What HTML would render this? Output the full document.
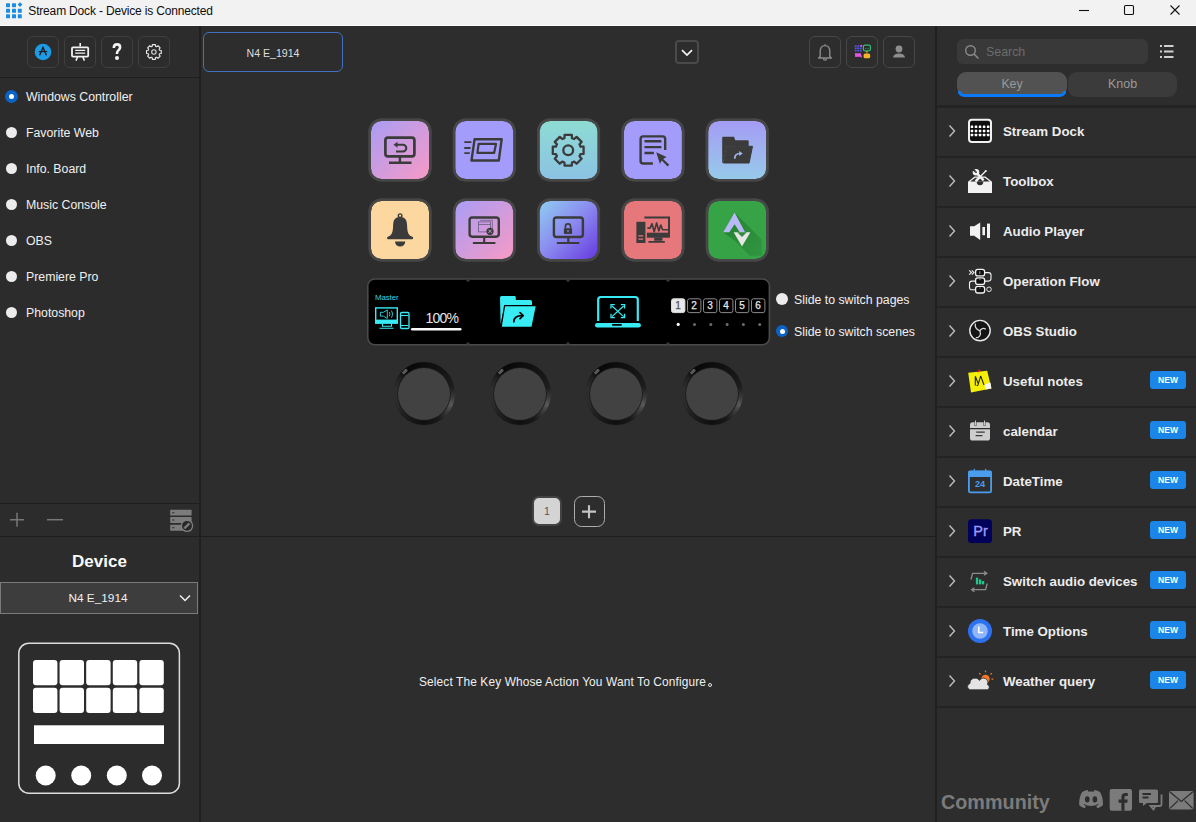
<!DOCTYPE html><html><head><meta charset="utf-8"><style>
*{box-sizing:border-box;margin:0;padding:0}
html,body{width:1196px;height:822px;overflow:hidden;background:#2d2d2d;font-family:"Liberation Sans",sans-serif;color:#e8e8e8}
.abs{position:absolute}
.tbtn{position:absolute;width:32px;height:32px;border:1px solid #3f3f3f;border-radius:6px}
.radio{position:absolute;width:13px;height:13px;border-radius:50%;background:#ececec}
.radio.on{background:#0b63c6}
.radio.on::after{content:"";position:absolute;left:4px;top:4px;width:5px;height:5px;border-radius:50%;background:#fff}
.ritem{position:absolute;font-size:12.3px;white-space:nowrap;color:#f0f0f0}
.nm{position:absolute;left:1003px;font-size:13.3px;font-weight:bold;color:#ececec;white-space:nowrap}
.new{position:absolute;left:1150px;width:36px;height:18px;border-radius:3px;background:#1b86e8;color:#fff;font-size:8.5px;font-weight:bold;text-align:center;line-height:18px}
.sep{position:absolute;left:937px;width:259px;height:2px;background:#232323}
</style></head><body>
<div class="abs" style="left:0;top:0;width:1196px;height:25px;background:#f3f2f2"></div>
<div class="abs" style="left:0;top:25px;width:1196px;height:1px;background:#fbfbfb"></div>
<svg class="abs" style="left:6px;top:2px" width="17" height="17" viewBox="0 0 17 17"><g fill="#1a8de2">
<rect x="0" y="1.2" width="4" height="4" rx="0.6"/><rect x="6" y="1.2" width="4" height="4" rx="0.6"/><path d="M14 0.2L16.4 2.6L14 5L11.6 2.6Z"/>
<rect x="0" y="6.8" width="4" height="4" rx="0.6"/><rect x="6" y="6.8" width="4" height="4" rx="0.6"/><rect x="11.8" y="6.8" width="4" height="4" rx="0.6"/>
<rect x="0" y="12.3" width="4" height="4" rx="0.6"/><rect x="6" y="12.3" width="4" height="4" rx="0.6"/><rect x="11.8" y="12.3" width="4" height="4" rx="0.6"/>
</g></svg>
<div class="abs" style="left:28.3px;top:3.5px;font-size:12px;letter-spacing:-0.17px;color:#0e0e0e;white-space:nowrap">Stream Dock - Device is Connected</div>
<svg class="abs" style="left:1070px;top:0" width="126" height="25">
<path d="M9 10.5H19" stroke="#111" stroke-width="1.1"/>
<rect x="54.5" y="5.5" width="9" height="9" rx="1.3" fill="none" stroke="#111" stroke-width="1.1"/>
<path d="M100.5 5.5L109.5 14.5M109.5 5.5L100.5 14.5" stroke="#111" stroke-width="1.1"/>
</svg>
<div class="abs" style="left:0;top:26px;width:199px;height:796px;background:#2c2c2c"></div>
<div class="abs" style="left:199px;top:26px;width:2px;height:796px;background:#202020"></div>
<div class="abs" style="left:0;top:77px;width:199px;height:1px;background:#1e1e1e"></div>
<div class="abs" style="left:0;top:503px;width:199px;height:1px;background:#1e1e1e"></div>
<div class="abs" style="left:0;top:536px;width:199px;height:1px;background:#1e1e1e"></div>
<div class="abs" style="left:201px;top:536px;width:734px;height:1px;background:#1e1e1e"></div>
<div class="abs" style="left:935px;top:26px;width:2px;height:796px;background:#202020"></div>
<div class="tbtn" style="left:27px;top:36px"></div>
<div class="tbtn" style="left:64px;top:36px"></div>
<div class="tbtn" style="left:101px;top:36px"></div>
<div class="tbtn" style="left:138px;top:36px"></div>
<svg class="abs" style="left:0;top:26px" width="200" height="50">
<circle cx="43" cy="26" r="8.3" fill="#1d9be6"/>
<path d="M39.6 29.2L43 21.4L46.4 29.2" fill="none" stroke="#1e1e1e" stroke-width="1.4"/>
<path d="M38.8 25.6H47.2" stroke="#1e1e1e" stroke-width="1.1"/>
<path d="M80.2 17V20.4" stroke="#f2f2f2" stroke-width="1.6"/>
<rect x="72" y="21.3" width="16.2" height="9.3" rx="1" fill="none" stroke="#f2f2f2" stroke-width="1.8"/>
<path d="M75.2 24.3H85.2M75.2 27.2H85.2" stroke="#f2f2f2" stroke-width="1.3"/>
<path d="M77.5 31L76 34.6M82.9 31L84.4 34.6" stroke="#f2f2f2" stroke-width="1.6"/>
<path d="M113.8 22C113.8 19.6 115.3 18.4 117 18.4C118.9 18.4 120.1 19.7 120.1 21.3C120.1 24.1 117 24.3 117 27.2V28" fill="none" stroke="#f4f4f4" stroke-width="2.6"/>
<circle cx="117" cy="32" r="2" fill="#f4f4f4"/>
</svg>
<svg class="abs" style="left:138px;top:36px" width="32" height="32"><path d="M14.16 10.36 L14.41 8.65 L17.39 8.65 L17.64 10.36 L18.65 10.78 L20.04 9.75 L22.15 11.86 L21.12 13.25 L21.54 14.26 L23.25 14.51 L23.25 17.49 L21.54 17.74 L21.12 18.75 L22.15 20.14 L20.04 22.25 L18.65 21.22 L17.64 21.64 L17.39 23.35 L14.41 23.35 L14.16 21.64 L13.15 21.22 L11.76 22.25 L9.65 20.14 L10.68 18.75 L10.26 17.74 L8.55 17.49 L8.55 14.51 L10.26 14.26 L10.68 13.25 L9.65 11.86 L11.76 9.75 L13.15 10.78Z" fill="none" stroke="#e8e8e8" stroke-width="1.15" stroke-linejoin="round"/><circle cx="15.9" cy="16" r="2.2" fill="none" stroke="#dcdcdc" stroke-width="1.1"/></svg>
<div class="radio on" style="left:5px;top:89.9px"></div><div class="ritem" style="left:26px;top:90.4px">Windows Controller</div>
<div class="radio" style="left:5.6px;top:126.6px;width:11.7px;height:11.7px"></div><div class="ritem" style="left:26px;top:126.4px">Favorite Web</div>
<div class="radio" style="left:5.6px;top:162.6px;width:11.7px;height:11.7px"></div><div class="ritem" style="left:26px;top:162.4px">Info. Board</div>
<div class="radio" style="left:5.6px;top:198.6px;width:11.7px;height:11.7px"></div><div class="ritem" style="left:26px;top:198.4px">Music Console</div>
<div class="radio" style="left:5.6px;top:234.6px;width:11.7px;height:11.7px"></div><div class="ritem" style="left:26px;top:234.4px">OBS</div>
<div class="radio" style="left:5.6px;top:270.5px;width:11.7px;height:11.7px"></div><div class="ritem" style="left:26px;top:270.4px">Premiere Pro</div>
<div class="radio" style="left:5.6px;top:306.5px;width:11.7px;height:11.7px"></div><div class="ritem" style="left:26px;top:306.4px">Photoshop</div>
<svg class="abs" style="left:0;top:504px" width="199" height="31">
<path d="M10 15.7H24M17 8.7V22.7" stroke="#777" stroke-width="1.5"/>
<path d="M47 15.7H63" stroke="#777" stroke-width="1.5"/>
<rect x="170.2" y="5.7" width="21.4" height="5.9" rx="0.6" fill="#7c7c7c"/>
<rect x="170.2" y="13" width="21.4" height="5.9" rx="0.6" fill="#7c7c7c"/>
<rect x="170.2" y="20.8" width="21.4" height="5.9" rx="0.6" fill="#7c7c7c"/>
<path d="M172.2 8.7H174.4M172.2 16H174.4M172.2 23.8H174.4" stroke="#2d2d2d" stroke-width="1.1"/>
<circle cx="187" cy="21.8" r="5.6" fill="#262626" stroke="#7c7c7c" stroke-width="1.4"/>
<path d="M184.4 24.4L189.4 19.4" stroke="#7c7c7c" stroke-width="2.2"/>
</svg>
<div class="abs" style="left:0;top:552px;width:199px;text-align:center;font-size:17px;font-weight:bold;color:#fafafa">Device</div>
<div class="abs" style="left:0;top:582px;width:198px;height:32px;background:#3d3d3d;border:1px solid #7a7a7a"></div>
<div class="abs" style="left:0;top:591px;width:196px;text-align:center;font-size:11.8px;color:#f0f0f0">N4 E_1914</div>
<svg class="abs" style="left:176px;top:590px" width="18" height="16"><path d="M4 5.5L9 10.5L14 5.5" fill="none" stroke="#f0f0f0" stroke-width="1.5"/></svg>
<svg class="abs" style="left:0;top:630px" width="200" height="180">
<rect x="18.8" y="13.2" width="160.6" height="150" rx="10" fill="none" stroke="#dcdcdc" stroke-width="1.5"/>
<rect x="33.0" y="30.0" width="24.4" height="25.2" rx="3" fill="#fff"/><rect x="59.6" y="30.0" width="24.4" height="25.2" rx="3" fill="#fff"/><rect x="86.2" y="30.0" width="24.4" height="25.2" rx="3" fill="#fff"/><rect x="112.8" y="30.0" width="24.4" height="25.2" rx="3" fill="#fff"/><rect x="139.4" y="30.0" width="24.4" height="25.2" rx="3" fill="#fff"/><rect x="33.0" y="57.8" width="24.4" height="25.2" rx="3" fill="#fff"/><rect x="59.6" y="57.8" width="24.4" height="25.2" rx="3" fill="#fff"/><rect x="86.2" y="57.8" width="24.4" height="25.2" rx="3" fill="#fff"/><rect x="112.8" y="57.8" width="24.4" height="25.2" rx="3" fill="#fff"/><rect x="139.4" y="57.8" width="24.4" height="25.2" rx="3" fill="#fff"/><rect x="34" y="95.3" width="130" height="18.7" fill="#fff"/><circle cx="45.7" cy="145.5" r="10" fill="#fff"/><circle cx="81.2" cy="145.5" r="10" fill="#fff"/><circle cx="116.8" cy="145.5" r="10" fill="#fff"/><circle cx="152" cy="145.5" r="10" fill="#fff"/></svg>
<div class="abs" style="left:203px;top:32px;width:140px;height:40px;border:1.2px solid #3f70c2;border-radius:6px"></div>
<div class="abs" style="left:203px;top:47px;width:140px;text-align:center;font-size:10.6px;color:#dedede">N4 E_1914</div>
<div class="abs" style="left:675px;top:40px;width:24px;height:24px;border:2px solid #4a4a4a;border-radius:4px"></div>
<svg class="abs" style="left:675px;top:40px" width="24" height="24"><path d="M7 10.2L12 15L17 10.2" fill="none" stroke="#f5f5f5" stroke-width="1.7"/></svg>
<div class="tbtn" style="left:809px;top:36px;border-color:#474747"></div>
<div class="tbtn" style="left:846px;top:36px;border-color:#474747"></div>
<div class="tbtn" style="left:883px;top:36px;border-color:#474747"></div>
<svg class="abs" style="left:809px;top:36px" width="110" height="32">
<path d="M16 8.2V9.3M11.2 20.5V15.6C11.2 12 13.1 9.6 16 9.6C18.9 9.6 20.8 12 20.8 15.6V20.5L22.4 22H9.6Z" fill="none" stroke="#8a8a8a" stroke-width="1.4" stroke-linejoin="round"/>
<path d="M14.4 22.6A1.6 1.6 0 0 0 17.6 22.6" fill="none" stroke="#8a8a8a" stroke-width="1.3"/>
<g transform="translate(37 0)">
<rect x="8.8" y="9.2" width="1.8" height="1.7" fill="#5656e6"/><rect x="11.3" y="9.2" width="1.8" height="1.7" fill="#5656e6"/><rect x="13.8" y="9.2" width="1.8" height="1.7" fill="#5656e6"/><rect x="8.8" y="11.5" width="1.8" height="1.7" fill="#5656e6"/><rect x="11.3" y="11.5" width="1.8" height="1.7" fill="#5656e6"/><rect x="13.8" y="11.5" width="1.8" height="1.7" fill="#5656e6"/><rect x="8.8" y="13.8" width="1.8" height="1.7" fill="#5656e6"/><rect x="11.3" y="13.8" width="1.8" height="1.7" fill="#5656e6"/><rect x="13.8" y="13.8" width="1.8" height="1.7" fill="#5656e6"/>
<circle cx="15.3" cy="9.8" r="1.1" fill="#e94fcf"/>
<rect x="17.4" y="9.2" width="7" height="5.6" rx="1.5" fill="none" stroke="#2fbf71" stroke-width="1.2"/>
<path d="M19.3 12.5H20.3M21.8 12.5H22.6" stroke="#2fbf71" stroke-width="0.9"/>
<path d="M8.8 17.2H14.8L16.2 21.8L14 20.8L9.2 21Z" fill="#e455e0"/>
<rect x="17.6" y="17.4" width="6.6" height="4.8" rx="1.5" fill="#f4b32a"/>
<path d="M20.9 15V17.4" stroke="#f4b32a" stroke-width="0.9"/>
</g>
<g transform="translate(74 0)">
<circle cx="16" cy="13" r="3.4" fill="#8e8e8e"/>
<path d="M10 21.6C10.3 18.8 12.8 17.4 16 17.4C19.2 17.4 21.7 18.8 22 21.6Z" fill="#8e8e8e"/>
</g>
</svg>
<svg class="abs" style="left:0;top:0" width="1196" height="822"><defs>
<linearGradient id="g1" x1="0" y1="0" x2="1" y2="1"><stop offset="0" stop-color="#a89df6"/><stop offset="1" stop-color="#f89ac4"/></linearGradient>
<linearGradient id="g3" x1="0" y1="0" x2="0" y2="1"><stop offset="0" stop-color="#8edcd2"/><stop offset="1" stop-color="#8bc2e4"/></linearGradient>
<linearGradient id="g5" x1="0" y1="0" x2="0" y2="1"><stop offset="0" stop-color="#a59bf6"/><stop offset="1" stop-color="#96cbe9"/></linearGradient>
<linearGradient id="g8" x1="0" y1="0" x2="1" y2="1"><stop offset="0" stop-color="#90d0f2"/><stop offset="0.5" stop-color="#8a88ef"/><stop offset="1" stop-color="#6436df"/></linearGradient>
<linearGradient id="gsh" x1="0" y1="0" x2="1" y2="1"><stop offset="0" stop-color="#217a2c"/><stop offset="1" stop-color="#2f9340"/></linearGradient>
</defs><g transform="translate(368.5 118.5)"><clipPath id="k0"><rect x="1.5" y="1.5" width="60" height="60" rx="11.5"/></clipPath><rect x="1.25" y="1.25" width="60.5" height="60.5" rx="11.8" fill="url(#g1)" stroke="#474747" stroke-width="2.5"/><g clip-path="url(#k0)"><rect x="16.9" y="19.1" width="29" height="18.8" rx="2.6" fill="none" stroke="#3b3b3b" stroke-width="2.7"/>
<path d="M31.4 38.5V43.5M20.5 44.2H43" stroke="#3b3b3b" stroke-width="2.4" fill="none"/>
<path d="M28 26.2H34.4A3.4 3.4 0 0 1 34.4 33H27.5" stroke="#3b3b3b" stroke-width="2.1" fill="none"/>
<path d="M25 26.2L29 23.2V29.2Z" fill="#3b3b3b"/></g><rect x="1.25" y="1.25" width="60.5" height="60.5" rx="11.8" fill="none" stroke="#474747" stroke-width="2.5"/></g>
<g transform="translate(452.8 118.5)"><clipPath id="k1"><rect x="1.5" y="1.5" width="60" height="60" rx="11.5"/></clipPath><rect x="1.25" y="1.25" width="60.5" height="60.5" rx="11.8" fill="#a39cfb" stroke="#474747" stroke-width="2.5"/><g clip-path="url(#k1)"><path d="M11.5 23.7H18.6M11.5 29.5H17.8M11.5 34.7H17" stroke="#3b3b3b" stroke-width="1.8"/>
<path d="M21.8 20.7H48.9L46 42H18.7Z" fill="none" stroke="#3b3b3b" stroke-width="2.4" stroke-linejoin="round"/>
<path d="M25.8 25.4H43.2L41.3 34.4H24.6Z" fill="none" stroke="#3b3b3b" stroke-width="2.2" stroke-linejoin="round"/></g><rect x="1.25" y="1.25" width="60.5" height="60.5" rx="11.8" fill="none" stroke="#474747" stroke-width="2.5"/></g>
<g transform="translate(537.1 118.5)"><clipPath id="k2"><rect x="1.5" y="1.5" width="60" height="60" rx="11.5"/></clipPath><rect x="1.25" y="1.25" width="60.5" height="60.5" rx="11.8" fill="url(#g3)" stroke="#474747" stroke-width="2.5"/><g clip-path="url(#k2)"><g transform="translate(31.1 31.8)"><path d="M12.23 -3.78 L15.4 -3.60 L15.4 3.60 L12.23 3.78 L11.32 5.97 L13.4 8.4 L8.4 13.4 L5.97 11.32 L3.78 12.23 L3.60 15.4 L-3.60 15.4 L-3.78 12.23 L-5.97 11.32 L-8.4 13.4 L-13.4 8.4 L-11.32 5.97 L-12.23 3.78 L-15.4 3.60 L-15.4 -3.60 L-12.23 -3.78 L-11.32 -5.97 L-13.4 -8.4 L-8.4 -13.4 L-5.97 -11.32 L-3.78 -12.23 L-3.60 -15.4 L3.60 -15.4 L3.78 -12.23 L5.97 -11.32 L8.4 -13.4 L13.4 -8.4 L11.32 -5.97Z" fill="none" stroke="#3b3b3b" stroke-width="2.3" stroke-linejoin="round"/>
<circle r="4.9" fill="none" stroke="#3b3b3b" stroke-width="2.3"/></g></g><rect x="1.25" y="1.25" width="60.5" height="60.5" rx="11.8" fill="none" stroke="#474747" stroke-width="2.5"/></g>
<g transform="translate(621.4 118.5)"><clipPath id="k3"><rect x="1.5" y="1.5" width="60" height="60" rx="11.5"/></clipPath><rect x="1.25" y="1.25" width="60.5" height="60.5" rx="11.8" fill="#a49cfa" stroke="#474747" stroke-width="2.5"/><g clip-path="url(#k3)"><path d="M43.8 31.5V20.5A2.6 2.6 0 0 0 41.2 17.9H21.8A2.6 2.6 0 0 0 19.2 20.5V42.4A2.6 2.6 0 0 0 21.8 45H31.5" fill="none" stroke="#3b3b3b" stroke-width="2.4"/>
<path d="M23.1 22.7H40M23.1 28.6H40M23.1 34.5H32.5" stroke="#3b3b3b" stroke-width="2.4"/>
<path d="M34.8 33.8L45.2 38.6L41.8 40.6L47.8 46.3L46.2 47.9L40.3 42.1L38.6 45.5Z" fill="#3b3b3b"/></g><rect x="1.25" y="1.25" width="60.5" height="60.5" rx="11.8" fill="none" stroke="#474747" stroke-width="2.5"/></g>
<g transform="translate(705.7 118.5)"><clipPath id="k4"><rect x="1.5" y="1.5" width="60" height="60" rx="11.5"/></clipPath><rect x="1.25" y="1.25" width="60.5" height="60.5" rx="11.8" fill="url(#g5)" stroke="#474747" stroke-width="2.5"/><g clip-path="url(#k4)"><path d="M16.5 19.3A1 1 0 0 1 17.5 18.3H28.3L29.6 21.8H42A1 1 0 0 1 43 22.8V27.5H21L17.5 44.3H16.5Z" fill="#3b3b3b"/>
<path d="M21.2 27.8H46.8L43.4 44.5H17.8Z" fill="#3b3b3b" stroke="#3b3b3b" stroke-width="1" stroke-linejoin="round"/>
<path d="M29 40.2C29 36.6 31 35 34.5 35" fill="none" stroke="#9db9ee" stroke-width="1.7"/>
<path d="M33.5 32.6L37 35L33.6 37.6Z" fill="#9db9ee"/></g><rect x="1.25" y="1.25" width="60.5" height="60.5" rx="11.8" fill="none" stroke="#474747" stroke-width="2.5"/></g>
<g transform="translate(368.5 198.5)"><clipPath id="k5"><rect x="1.5" y="1.5" width="60" height="60" rx="11.5"/></clipPath><rect x="1.25" y="1.25" width="60.5" height="60.5" rx="11.8" fill="#fcd79f" stroke="#474747" stroke-width="2.5"/><g clip-path="url(#k5)"><circle cx="31.6" cy="17.2" r="1.8" fill="none" stroke="#3b3b3b" stroke-width="1.4"/>
<path d="M31.6 18.6C26.5 18.6 24.8 21.5 24.6 27C24.4 34 23.5 36.6 19 38.6C18.2 39.1 18.5 40.8 19.6 40.8H43.6C44.7 40.8 45 39.1 44.2 38.6C39.7 36.6 38.8 34 38.6 27C38.4 21.5 36.7 18.6 31.6 18.6Z" fill="#3b3b3b"/>
<path d="M26.5 43H36.8C36.5 46.3 34.5 48 31.6 48C28.7 48 26.8 46.3 26.5 43Z" fill="#3b3b3b"/></g><rect x="1.25" y="1.25" width="60.5" height="60.5" rx="11.8" fill="none" stroke="#474747" stroke-width="2.5"/></g>
<g transform="translate(452.8 198.5)"><clipPath id="k6"><rect x="1.5" y="1.5" width="60" height="60" rx="11.5"/></clipPath><rect x="1.25" y="1.25" width="60.5" height="60.5" rx="11.8" fill="url(#g1)" stroke="#474747" stroke-width="2.5"/><g clip-path="url(#k6)"><rect x="16.8" y="19" width="29.2" height="19.2" rx="2.6" fill="none" stroke="#3b3b3b" stroke-width="2.4"/>
<path d="M31.4 38.5V43.5M20.1 44.5H42.6" stroke="#3b3b3b" stroke-width="2.2" fill="none"/>
<rect x="25.6" y="23.4" width="12" height="10" fill="none" stroke="#6b5d84" stroke-width="0.8"/>
<path d="M25.6 26H37.6M27.5 21.8H39.5V31" fill="none" stroke="#6b5d84" stroke-width="0.8"/>
<circle cx="37.2" cy="32.8" r="3.6" fill="#3b3b3b"/>
<path d="M35.6 31.2L38.8 34.4M38.8 31.2L35.6 34.4" stroke="#c9a3d8" stroke-width="0.9"/></g><rect x="1.25" y="1.25" width="60.5" height="60.5" rx="11.8" fill="none" stroke="#474747" stroke-width="2.5"/></g>
<g transform="translate(537.1 198.5)"><clipPath id="k7"><rect x="1.5" y="1.5" width="60" height="60" rx="11.5"/></clipPath><rect x="1.25" y="1.25" width="60.5" height="60.5" rx="11.8" fill="url(#g8)" stroke="#474747" stroke-width="2.5"/><g clip-path="url(#k7)"><rect x="16.8" y="19" width="29" height="19.5" rx="2.6" fill="none" stroke="#3b3b3b" stroke-width="2.4"/>
<path d="M31.2 38.8V43.5M19.8 44.5H42.2" stroke="#3b3b3b" stroke-width="2.2" fill="none"/>
<path d="M28.3 30V28A2.6 2.6 0 0 1 33.5 28V30" fill="none" stroke="#3b3b3b" stroke-width="1.6"/>
<rect x="26.8" y="29.8" width="8.2" height="5.8" rx="0.8" fill="#3b3b3b"/>
<rect x="30.3" y="31.5" width="1.2" height="2.2" fill="#8a86ee"/></g><rect x="1.25" y="1.25" width="60.5" height="60.5" rx="11.8" fill="none" stroke="#474747" stroke-width="2.5"/></g>
<g transform="translate(621.4 198.5)"><clipPath id="k8"><rect x="1.5" y="1.5" width="60" height="60" rx="11.5"/></clipPath><rect x="1.25" y="1.25" width="60.5" height="60.5" rx="11.8" fill="#e6777a" stroke="#474747" stroke-width="2.5"/><g clip-path="url(#k8)"><path d="M23 19H47.6V38" fill="none" stroke="#3b3b3b" stroke-width="2"/>
<rect x="24.6" y="34.2" width="24" height="5" fill="#3b3b3b"/>
<rect x="32.8" y="39" width="8.2" height="3.2" fill="#3b3b3b"/>
<path d="M27 43.4H43.4" stroke="#3b3b3b" stroke-width="1.8"/>
<rect x="15" y="23.3" width="9.2" height="21.2" fill="#3b3b3b"/>
<path d="M24.9 22V45" stroke="#e6777a" stroke-width="1.2"/>
<path d="M17 37.4H21.8M17 40.6H21.8" stroke="#e6777a" stroke-width="1.3"/>
<path d="M26 29.6H28.6L30.6 25.2L32.8 33.2L35.2 24.4L37.4 32.4L39.4 26.6L41.2 31.2H47" fill="none" stroke="#3b3b3b" stroke-width="1.6" stroke-linejoin="round"/></g><rect x="1.25" y="1.25" width="60.5" height="60.5" rx="11.8" fill="none" stroke="#474747" stroke-width="2.5"/></g>
<g transform="translate(705.7 198.5)"><clipPath id="k9"><rect x="1.5" y="1.5" width="60" height="60" rx="11.5"/></clipPath><rect x="1.25" y="1.25" width="60.5" height="60.5" rx="11.8" fill="#36a446" stroke="#474747" stroke-width="2.5"/><g clip-path="url(#k9)"><path d="M17.5 33.7L28.9 14L56 41V57.2L44 57.2L30 43Z" fill="url(#gsh)" opacity="0.85"/>
<path d="M28.9 14L39.4 33.7H34.1L28.9 25.8L23.6 33.7H17.5Z" fill="#b8b9f6"/>
<path d="M28 33.7H44.7L36.3 48.1Z" fill="#e6e6e6"/>
<path d="M31.5 33.7H41.1L36.3 38.5Z" fill="#2d8c3c"/></g><rect x="1.25" y="1.25" width="60.5" height="60.5" rx="11.8" fill="none" stroke="#474747" stroke-width="2.5"/></g></svg>
<svg class="abs" style="left:0;top:0" width="1196" height="822">
<defs>
<radialGradient id="ring" cx="0.5" cy="0.5" r="0.5"><stop offset="0.8" stop-color="#3a3a3a"/><stop offset="0.86" stop-color="#111"/><stop offset="0.96" stop-color="#1a1a1a"/><stop offset="1" stop-color="#2d2d2d"/></radialGradient>
<linearGradient id="ringhl" x1="0" y1="0" x2="1" y2="1"><stop offset="0" stop-color="#0c0c0c"/><stop offset="0.55" stop-color="#0f0f0f"/><stop offset="0.8" stop-color="#5a5a5a"/><stop offset="1" stop-color="#111"/></linearGradient>
</defs>
<rect x="367.8" y="279" width="401.6" height="65.8" rx="7" fill="#000" stroke="#4a4a4a" stroke-width="1.6"/>
<path d="M465.5 279.8L468 282.3L470.5 279.8ZM565.5 279.8L568 282.3L570.5 279.8ZM665.5 279.8L668 282.3L670.5 279.8ZM465.5 344.2L468 341.7L470.5 344.2ZM565.5 344.2L568 341.7L570.5 344.2ZM665.5 344.2L668 341.7L670.5 344.2Z" fill="#333"/>

</svg>
<div class="abs" style="left:392.7px;top:362.4px;width:62.6px;height:62.6px;border-radius:50%;background:conic-gradient(from 0deg,#0d0d0d 0deg,#141414 40deg,#1e1e1e 78deg,#3e3e3e 100deg,#585858 112deg,#3a3a3a 128deg,#1a1a1a 150deg,#0f0f0f 180deg,#1a1a1a 212deg,#2a2a2a 245deg,#2e2e2e 280deg,#1e1e1e 305deg,#060606 320deg,#0d0d0d 360deg)"></div>
<div class="abs" style="left:398.0px;top:367.7px;width:52px;height:52px;border-radius:50%;background:#424242;box-shadow:0 0 0 0.8px #1a1a1a"></div>
<div class="abs" style="left:402.0px;top:370.3px;width:6px;height:3.4px;background:#5a5a5a;transform:rotate(-45deg);border-radius:1px"></div>
<div class="abs" style="left:488.7px;top:362.4px;width:62.6px;height:62.6px;border-radius:50%;background:conic-gradient(from 0deg,#0d0d0d 0deg,#141414 40deg,#1e1e1e 78deg,#3e3e3e 100deg,#585858 112deg,#3a3a3a 128deg,#1a1a1a 150deg,#0f0f0f 180deg,#1a1a1a 212deg,#2a2a2a 245deg,#2e2e2e 280deg,#1e1e1e 305deg,#060606 320deg,#0d0d0d 360deg)"></div>
<div class="abs" style="left:494.0px;top:367.7px;width:52px;height:52px;border-radius:50%;background:#424242;box-shadow:0 0 0 0.8px #1a1a1a"></div>
<div class="abs" style="left:498.0px;top:370.3px;width:6px;height:3.4px;background:#5a5a5a;transform:rotate(-45deg);border-radius:1px"></div>
<div class="abs" style="left:584.7px;top:362.4px;width:62.6px;height:62.6px;border-radius:50%;background:conic-gradient(from 0deg,#0d0d0d 0deg,#141414 40deg,#1e1e1e 78deg,#3e3e3e 100deg,#585858 112deg,#3a3a3a 128deg,#1a1a1a 150deg,#0f0f0f 180deg,#1a1a1a 212deg,#2a2a2a 245deg,#2e2e2e 280deg,#1e1e1e 305deg,#060606 320deg,#0d0d0d 360deg)"></div>
<div class="abs" style="left:590.0px;top:367.7px;width:52px;height:52px;border-radius:50%;background:#424242;box-shadow:0 0 0 0.8px #1a1a1a"></div>
<div class="abs" style="left:594.0px;top:370.3px;width:6px;height:3.4px;background:#5a5a5a;transform:rotate(-45deg);border-radius:1px"></div>
<div class="abs" style="left:680.7px;top:362.4px;width:62.6px;height:62.6px;border-radius:50%;background:conic-gradient(from 0deg,#0d0d0d 0deg,#141414 40deg,#1e1e1e 78deg,#3e3e3e 100deg,#585858 112deg,#3a3a3a 128deg,#1a1a1a 150deg,#0f0f0f 180deg,#1a1a1a 212deg,#2a2a2a 245deg,#2e2e2e 280deg,#1e1e1e 305deg,#060606 320deg,#0d0d0d 360deg)"></div>
<div class="abs" style="left:686.0px;top:367.7px;width:52px;height:52px;border-radius:50%;background:#424242;box-shadow:0 0 0 0.8px #1a1a1a"></div>
<div class="abs" style="left:690.0px;top:370.3px;width:6px;height:3.4px;background:#5a5a5a;transform:rotate(-45deg);border-radius:1px"></div>
<svg class="abs" style="left:0;top:0" width="1196" height="822">
</svg>
<div class="abs" style="left:375px;top:292.5px;font-size:7.9px;color:#3ad6e0;letter-spacing:-0.1px">Master</div>
<svg class="abs" style="left:370px;top:300px" width="100" height="35">
<rect x="5.7" y="7.9" width="21.6" height="13" fill="none" stroke="#38eaf4" stroke-width="1.4"/>
<rect x="5" y="19.6" width="23" height="4.3" fill="#38eaf4"/>
<path d="M12.5 23.8V26.2H21.5V23.8M9.5 28.3H23.5" stroke="#38eaf4" stroke-width="1.1" fill="none"/>
<path d="M10.4 12.3H13.4L17.3 9.9V18.5L13.4 16.1H10.4Z" fill="none" stroke="#2ac6d0" stroke-width="1" stroke-linejoin="round"/>
<path d="M19.3 12.1Q20.7 14.2 19.3 16.3M21.5 10.6Q23.9 14.2 21.5 17.8" fill="none" stroke="#2ac6d0" stroke-width="1"/>
<rect x="30.5" y="12.5" width="8.5" height="16" rx="1.2" fill="none" stroke="#38eaf4" stroke-width="1.3"/>
<path d="M30.8 15.5H38.7M30.8 25.5H38.7" stroke="#38eaf4" stroke-width="1"/>
<rect x="41" y="28" width="50.5" height="2.6" rx="1.3" fill="#fafafa"/>
</svg>
<div class="abs" style="left:425.5px;top:310px;font-size:14px;letter-spacing:-0.8px;color:#e6e6e6">100%</div>
<svg class="abs" style="left:480px;top:280px" width="200" height="60">
<path d="M20 17.6A1.6 1.6 0 0 1 21.6 16H34.4A1.4 1.4 0 0 1 35.8 17.4V20H50.4A1.6 1.6 0 0 1 52 21.6V28H24L20.6 44Z" fill="#38ecf4"/>
<path d="M24.6 25.6H55.2A1 1 0 0 1 56.2 26.8L52.2 46.4A1 1 0 0 1 51.2 47.3H22.2A1 1 0 0 1 21.3 46.2Z" fill="#38ecf4" stroke="#000" stroke-width="1.2" stroke-linejoin="round"/>
<path d="M33.8 41.8C33.8 37.6 36.2 35.6 42.4 35.6" fill="none" stroke="#000" stroke-width="1.7" stroke-linecap="round"/>
<path d="M40 32.6L43.2 35.6L40 38.6" fill="none" stroke="#000" stroke-width="1.7" stroke-linecap="round" stroke-linejoin="round"/>
<path d="M118.2 41V19.6A2.6 2.6 0 0 1 120.8 17H155.2A2.6 2.6 0 0 1 157.8 19.6V41" fill="none" stroke="#38eaf4" stroke-width="2.2"/>
<rect x="115" y="43.1" width="45.9" height="4.4" rx="2.2" fill="#38eaf4"/>
<rect x="132.1" y="44" width="9.7" height="1.8" rx="0.6" fill="#000"/>
<path d="M132 26L143.6 36.6M143.6 26L132 36.6" stroke="#38eaf4" stroke-width="1.2"/>
<path d="M131 28.4V24.6H134.8M140.8 24.6H144.6V28.4M144.6 33.8V37.6H140.8M134.8 37.6H131V33.8" fill="none" stroke="#38eaf4" stroke-width="1.3"/>
</svg>
<svg class="abs" style="left:668px;top:290px" width="102" height="42"><rect x="3.5" y="8.8" width="13.4" height="13.8" rx="2" fill="#e8e8e8" stroke="#ddd" stroke-width="1"/><rect x="19.5" y="8.8" width="13.4" height="13.8" rx="2" fill="#000" stroke="#8a8a8a" stroke-width="1"/><rect x="35.5" y="8.8" width="13.4" height="13.8" rx="2" fill="#000" stroke="#8a8a8a" stroke-width="1"/><rect x="51.5" y="8.8" width="13.4" height="13.8" rx="2" fill="#000" stroke="#8a8a8a" stroke-width="1"/><rect x="67.5" y="8.8" width="13.4" height="13.8" rx="2" fill="#000" stroke="#8a8a8a" stroke-width="1"/><rect x="83.5" y="8.8" width="13.4" height="13.8" rx="2" fill="#000" stroke="#8a8a8a" stroke-width="1"/><circle cx="10.2" cy="34.4" r="1.6" fill="#fff"/><circle cx="26.5" cy="34.4" r="1.5" fill="#6c6c6c"/><circle cx="42.8" cy="34.4" r="1.5" fill="#6c6c6c"/><circle cx="59.1" cy="34.4" r="1.5" fill="#6c6c6c"/><circle cx="75.4" cy="34.4" r="1.5" fill="#6c6c6c"/><circle cx="91.7" cy="34.4" r="1.5" fill="#6c6c6c"/></svg><div class="abs" style="left:671px;top:300px;width:14px;text-align:center;font-size:10px;-webkit-text-stroke:0.25px currentColor;color:#555">1</div><div class="abs" style="left:687px;top:300px;width:14px;text-align:center;font-size:10px;-webkit-text-stroke:0.25px currentColor;color:#e8e8e8">2</div><div class="abs" style="left:703px;top:300px;width:14px;text-align:center;font-size:10px;-webkit-text-stroke:0.25px currentColor;color:#e8e8e8">3</div><div class="abs" style="left:719px;top:300px;width:14px;text-align:center;font-size:10px;-webkit-text-stroke:0.25px currentColor;color:#e8e8e8">4</div><div class="abs" style="left:735px;top:300px;width:14px;text-align:center;font-size:10px;-webkit-text-stroke:0.25px currentColor;color:#e8e8e8">5</div><div class="abs" style="left:751px;top:300px;width:14px;text-align:center;font-size:10px;-webkit-text-stroke:0.25px currentColor;color:#e8e8e8">6</div>
<div class="radio" style="left:775.5px;top:293px;width:12px;height:12px"></div><div class="ritem" style="left:794px;top:293.2px">Slide to switch pages</div>
<div class="radio on" style="left:775.5px;top:325.4px;width:12px;height:12px"></div><div class="ritem" style="left:794px;top:324.6px">Slide to switch scenes</div>
<div class="abs" style="left:532px;top:496px;width:30px;height:30px;border-radius:7px;background:#d4d4d4;border:2px solid #434343"></div>
<div class="abs" style="left:532px;top:505px;width:30px;text-align:center;font-size:10.5px;color:#555">1</div>
<div class="abs" style="left:573.5px;top:495.5px;width:31.5px;height:31.5px;border-radius:7.5px;border:1.8px solid #acacac"></div>
<svg class="abs" style="left:573px;top:495.5px" width="32" height="32"><path d="M9 15.6H23M16 9.3V22.3" stroke="#c4c4c4" stroke-width="2.1"/></svg>
<div class="abs" style="left:419px;top:675px;font-size:11.9px;letter-spacing:0.13px;color:#f0f0f0;white-space:nowrap">Select The Key Whose Action You Want To Configure</div>
<div class="abs" style="left:707.6px;top:682.6px;width:4.6px;height:4.6px;border-radius:50%;border:1.1px solid #e8e8e8"></div>
<div class="abs" style="left:957px;top:39px;width:191px;height:25px;border-radius:6px;background:#393939"></div>
<svg class="abs" style="left:960px;top:40px" width="24" height="24"><circle cx="10.5" cy="10.5" r="4.8" fill="none" stroke="#8a8a8a" stroke-width="1.4"/><path d="M14 14L18.5 18.5" stroke="#8a8a8a" stroke-width="1.5"/></svg>
<div class="abs" style="left:986px;top:44.5px;font-size:12.4px;color:#6c6c6c">Search</div>
<svg class="abs" style="left:1158px;top:42px" width="20" height="20"><g fill="#cfcfcf"><rect x="2" y="3" width="2" height="2"/><rect x="2" y="8.5" width="2" height="2"/><rect x="2" y="14" width="2" height="2"/><rect x="6" y="3" width="9.5" height="2"/><rect x="6" y="8.5" width="9.5" height="2"/><rect x="6" y="14" width="9.5" height="2"/></g></svg>
<div class="abs" style="left:957px;top:72px;width:110px;height:24px;border-radius:9px;background:#525252"></div>
<svg class="abs" style="left:950px;top:80px" width="125" height="20"><path d="M9.4 12.2Q10.4 15.6 15.5 15.6H108.5Q113.6 15.6 114.6 12.2" fill="none" stroke="#0b7af6" stroke-width="3" stroke-linecap="round"/></svg>
<div class="abs" style="left:1068px;top:72px;width:109px;height:25px;border-radius:9px;background:#3b3b3b"></div>
<div class="abs" style="left:957px;top:77px;width:110px;text-align:center;font-size:12.3px;color:#9a9a9a">Key</div>
<div class="abs" style="left:1068px;top:77px;width:109px;text-align:center;font-size:12.5px;color:#9a9a9a">Knob</div>

<div class="sep" style="top:105px;height:3px"></div>
<svg class="abs" style="left:946px;top:123px" width="12" height="16"><path d="M3.5 2.5L8.5 8L3.5 13.5" fill="none" stroke="#bdbdbd" stroke-width="1.4"/></svg>
<div class="nm" style="top:124px">Stream Dock</div>
<div class="sep" style="top:156px;height:2px"></div>
<svg class="abs" style="left:946px;top:173px" width="12" height="16"><path d="M3.5 2.5L8.5 8L3.5 13.5" fill="none" stroke="#bdbdbd" stroke-width="1.4"/></svg>
<div class="nm" style="top:174px">Toolbox</div>
<div class="sep" style="top:206px;height:2px"></div>
<svg class="abs" style="left:946px;top:223px" width="12" height="16"><path d="M3.5 2.5L8.5 8L3.5 13.5" fill="none" stroke="#bdbdbd" stroke-width="1.4"/></svg>
<div class="nm" style="top:224px">Audio Player</div>
<div class="sep" style="top:256px;height:2px"></div>
<svg class="abs" style="left:946px;top:273px" width="12" height="16"><path d="M3.5 2.5L8.5 8L3.5 13.5" fill="none" stroke="#bdbdbd" stroke-width="1.4"/></svg>
<div class="nm" style="top:274px">Operation Flow</div>
<div class="sep" style="top:306px;height:2px"></div>
<svg class="abs" style="left:946px;top:323px" width="12" height="16"><path d="M3.5 2.5L8.5 8L3.5 13.5" fill="none" stroke="#bdbdbd" stroke-width="1.4"/></svg>
<div class="nm" style="top:324px">OBS Studio</div>
<div class="sep" style="top:356px;height:2px"></div>
<svg class="abs" style="left:946px;top:373px" width="12" height="16"><path d="M3.5 2.5L8.5 8L3.5 13.5" fill="none" stroke="#bdbdbd" stroke-width="1.4"/></svg>
<div class="nm" style="top:374px">Useful notes</div>
<div class="new" style="top:371px">NEW</div>
<div class="sep" style="top:406px;height:2px"></div>
<svg class="abs" style="left:946px;top:423px" width="12" height="16"><path d="M3.5 2.5L8.5 8L3.5 13.5" fill="none" stroke="#bdbdbd" stroke-width="1.4"/></svg>
<div class="nm" style="top:424px">calendar</div>
<div class="new" style="top:421px">NEW</div>
<div class="sep" style="top:456px;height:2px"></div>
<svg class="abs" style="left:946px;top:473px" width="12" height="16"><path d="M3.5 2.5L8.5 8L3.5 13.5" fill="none" stroke="#bdbdbd" stroke-width="1.4"/></svg>
<div class="nm" style="top:474px">DateTime</div>
<div class="new" style="top:471px">NEW</div>
<div class="sep" style="top:506px;height:2px"></div>
<svg class="abs" style="left:946px;top:523px" width="12" height="16"><path d="M3.5 2.5L8.5 8L3.5 13.5" fill="none" stroke="#bdbdbd" stroke-width="1.4"/></svg>
<div class="nm" style="top:524px">PR</div>
<div class="new" style="top:521px">NEW</div>
<div class="sep" style="top:556px;height:2px"></div>
<svg class="abs" style="left:946px;top:573px" width="12" height="16"><path d="M3.5 2.5L8.5 8L3.5 13.5" fill="none" stroke="#bdbdbd" stroke-width="1.4"/></svg>
<div class="nm" style="top:574px">Switch audio devices</div>
<div class="new" style="top:571px">NEW</div>
<div class="sep" style="top:606px;height:2px"></div>
<svg class="abs" style="left:946px;top:623px" width="12" height="16"><path d="M3.5 2.5L8.5 8L3.5 13.5" fill="none" stroke="#bdbdbd" stroke-width="1.4"/></svg>
<div class="nm" style="top:624px">Time Options</div>
<div class="new" style="top:621px">NEW</div>
<div class="sep" style="top:656px;height:2px"></div>
<svg class="abs" style="left:946px;top:673px" width="12" height="16"><path d="M3.5 2.5L8.5 8L3.5 13.5" fill="none" stroke="#bdbdbd" stroke-width="1.4"/></svg>
<div class="nm" style="top:674px">Weather query</div>
<div class="new" style="top:671px">NEW</div>
<div class="sep" style="top:706px"></div>
<svg class="abs" style="left:0;top:0" width="1196" height="822">
<rect x="969" y="119.8" width="22" height="22.2" rx="3" fill="#0e0e0e" stroke="#f2f2f2" stroke-width="2"/>
<rect x="970.70" y="125.55" width="2.5" height="2.5" rx="0.4" fill="#fff"/>
<rect x="974.75" y="125.55" width="2.5" height="2.5" rx="0.4" fill="#fff"/>
<rect x="978.80" y="125.55" width="2.5" height="2.5" rx="0.4" fill="#fff"/>
<rect x="982.85" y="125.55" width="2.5" height="2.5" rx="0.4" fill="#fff"/>
<rect x="986.90" y="125.55" width="2.5" height="2.5" rx="0.4" fill="#fff"/>
<rect x="970.70" y="129.65" width="2.5" height="2.5" rx="0.4" fill="#fff"/>
<rect x="974.75" y="129.65" width="2.5" height="2.5" rx="0.4" fill="#fff"/>
<rect x="978.80" y="129.65" width="2.5" height="2.5" rx="0.4" fill="#fff"/>
<rect x="982.85" y="129.65" width="2.5" height="2.5" rx="0.4" fill="#fff"/>
<rect x="986.90" y="129.65" width="2.5" height="2.5" rx="0.4" fill="#fff"/>
<rect x="970.70" y="133.85" width="2.5" height="2.5" rx="0.4" fill="#fff"/>
<rect x="974.75" y="133.85" width="2.5" height="2.5" rx="0.4" fill="#fff"/>
<rect x="978.80" y="133.85" width="2.5" height="2.5" rx="0.4" fill="#fff"/>
<rect x="982.85" y="133.85" width="2.5" height="2.5" rx="0.4" fill="#fff"/>
<rect x="986.90" y="133.85" width="2.5" height="2.5" rx="0.4" fill="#fff"/>
<path d="M968 181.8L974.6 176.6H985.4L992 181.8V193H968Z" fill="#f2f2f2"/>
<path d="M970.2 181.6L975.2 177.8H984.8L989.8 181.6Z" fill="#2d2d2d"/>
<path d="M976.6 181.6A3.4 3.6 0 0 0 983.4 181.6Z" fill="#2d2d2d"/>
<path d="M985.6 171.2L978.6 178.2" stroke="#f2f2f2" stroke-width="1.3"/>
<circle cx="985.8" cy="171" r="1.1" fill="#f2f2f2"/>
<path d="M979.2 177.6L975.6 181.4" stroke="#f2f2f2" stroke-width="2.6"/>
<path d="M977.2 173.6L983.6 180.4" stroke="#f2f2f2" stroke-width="2.4"/>
<circle cx="976" cy="172.2" r="3.3" fill="#f2f2f2"/>
<path d="M972.4 168.6L975.4 171.6" stroke="#2d2d2d" stroke-width="2"/>
<circle cx="976" cy="172.2" r="0.9" fill="#2d2d2d"/>
<path d="M970 226.3H974.2L980.2 222.4V240L974.2 235.8H970Z" fill="#f2f2f2"/>
<rect x="982.4" y="227" width="2.6" height="8.2" fill="#f2f2f2"/>
<rect x="987" y="223.6" width="3" height="14.4" fill="#f2f2f2"/>
<path d="M969.2 270.3L971.4 272.5L969.2 274.7M971.8 270.3L974 272.5L971.8 274.7" fill="none" stroke="#f2f2f2" stroke-width="1.1"/>
<rect x="975.6" y="269.3" width="9" height="6.6" rx="2.2" fill="#111" stroke="#f2f2f2" stroke-width="1.3"/>
<rect x="975.6" y="277.8" width="9" height="6.6" rx="2.2" fill="#111" stroke="#f2f2f2" stroke-width="1.3"/>
<rect x="975.6" y="286.4" width="9" height="6.6" rx="2.2" fill="#111" stroke="#f2f2f2" stroke-width="1.3"/>
<path d="M984.6 272.6H988.5A2.5 2.5 0 0 1 991 275.1V278.6A2.5 2.5 0 0 1 988.5 281.1H984.6" fill="none" stroke="#f2f2f2" stroke-width="1.1"/>
<path d="M975.6 281.1H971.8A2.3 2.3 0 0 0 969.5 283.4V287.4A2.3 2.3 0 0 0 971.8 289.7H975.6" fill="none" stroke="#f2f2f2" stroke-width="1.1"/>
<circle cx="989" cy="289.3" r="2.3" fill="none" stroke="#f2f2f2" stroke-width="0.9"/>
<path d="M979.8 271.2V274M979.4 279.6H980.6M979.4 288H980.6" stroke="#aaa" stroke-width="0.9"/>
<circle cx="980" cy="330.6" r="10.2" fill="#151515" stroke="#e8e8e8" stroke-width="1.4"/>
<g fill="none" stroke="#d8d8d8" stroke-width="1.3">
<path d="M975.5 323.6C974.6 326.6 976.4 329.4 980 330.8"/>
<path d="M985.8 329.3C983.5 327.6 980.8 328.4 980 330.8"/>
<path d="M975.8 337.6C979.2 338.2 981.3 335 980 330.8"/>
</g>
<path d="M968.2 372.8L987.2 370.8L991.4 388.6L971 392.4Z" fill="#f5ef0a"/>
<path d="M984.5 384.4L990.5 382.5L991.4 388.6L985.6 389.6Z" fill="#f4f4f4"/>
<path d="M977.4 372L980 369.6" stroke="#e01010" stroke-width="1.6"/>
<path d="M975.3 376.2V385.6M975.3 376.2L978.3 383.8L980.7 376M980.7 376L984 385M976.6 385.4H978.2" fill="none" stroke="#2a2a14" stroke-width="1.1"/>
<path d="M972.5 422.2H987.5A2.5 2.5 0 0 1 990 424.7V428H970V424.7A2.5 2.5 0 0 1 972.5 422.2Z" fill="#cdcdcd"/>
<path d="M970 429.2H990V438A2.6 2.6 0 0 1 987.4 440.6H972.6A2.6 2.6 0 0 1 970 438Z" fill="#cdcdcd"/>
<path d="M975.5 421V426M984.5 421V426" stroke="#2d2d2d" stroke-width="1.8"/>
<path d="M975.5 420.5V425.5M984.5 420.5V425.5" stroke="#e0e0e0" stroke-width="0.9"/>
<path d="M976.2 432.2H984.8M975.6 435.6H982.5" stroke="#3a3a3a" stroke-width="1.3"/>
<rect x="968.9" y="471.4" width="22.2" height="21" rx="1.5" fill="none" stroke="#4a9ded" stroke-width="1.8"/>
<rect x="968.2" y="470.7" width="23.6" height="6.2" rx="1.5" fill="#4a9ded"/>
<path d="M974.3 468.8V473M985.7 468.8V473" stroke="#4a9ded" stroke-width="1.2"/>
<text x="980" y="487" text-anchor="middle" font-family="Liberation Sans" font-size="9.2" font-weight="bold" fill="#4a9ded">24</text>
<rect x="968" y="519.2" width="24" height="23.8" rx="3.5" fill="#01015a"/>
<text x="980.6" y="536.2" text-anchor="middle" font-family="Liberation Sans" font-size="14.5" fill="#9b9bff" stroke="#9b9bff" stroke-width="0.35">Pr</text>
<path d="M971 579.5L972.6 573.3H986.6M984 571.3L986.8 573.3L984 575.3" fill="none" stroke="#8d8d8d" stroke-width="1.3"/>
<path d="M987.2 583.5L985.6 589.7H971.8M974.4 587.7L971.6 589.7L974.4 591.7" fill="none" stroke="#8d8d8d" stroke-width="1.3"/>
<rect x="975.9" y="577.6" width="2.3" height="6.8" fill="#21c68d"/>
<rect x="978.9" y="579.4" width="2.3" height="5" fill="#21c68d"/>
<rect x="981.9" y="581" width="2.3" height="3.4" fill="#21c68d"/>
<circle cx="980" cy="631" r="12" fill="#2e71ee"/>
<circle cx="980" cy="631" r="7.8" fill="#8fb6f8"/>
<path d="M978.8 626.6V632.5H983.2" fill="none" stroke="#fff" stroke-width="1.6"/>
<g stroke="#f07a2a" stroke-width="1.2"><path d="M985.5 670.5V672.3M979.2 673.2L980.5 674.5M991.8 673.2L990.5 674.5M993.3 679.2H991.5"/></g>
<circle cx="985.5" cy="679" r="4.2" fill="#f07a2a"/>
<path d="M970.5 689.8A3.2 3.2 0 0 1 970 683.5A5.2 5.2 0 0 1 979.6 680.5A4.3 4.3 0 0 1 987.4 684.6A2.7 2.7 0 0 1 987.3 689.8Z" fill="#e4e4e4" stroke="#2d2d2d" stroke-width="0.8"/>
</svg>
<div class="abs" style="left:941px;top:790.5px;font-size:19.8px;font-weight:bold;color:#7b7b7b">Community</div>
<svg class="abs" style="left:1075px;top:785px" width="121" height="30" fill="#7b7b7b">
<g transform="translate(2.8 4) scale(0.83 1.02)"><path d="M5 3.2C7.5 1.9 10 1.2 12 1L12.8 2.7C14.9 2.4 17.1 2.4 19.2 2.7L20 1C22 1.2 24.5 1.9 27 3.2C29.6 7 30.6 11.2 30.3 15.7C28.2 17.4 26 18.3 23.6 18.9L22.2 16.7C23.3 16.3 24.3 15.8 25.2 15.2L24.5 14.7C19.2 17.2 12.8 17.2 7.5 14.7L6.8 15.2C7.7 15.8 8.7 16.3 9.8 16.7L8.4 18.9C6 18.3 3.8 17.4 1.7 15.7C1.4 11.2 2.4 7 5 3.2Z"/>
<ellipse cx="11.4" cy="10.2" rx="2.8" ry="3" fill="#2d2d2d"/><ellipse cx="20.6" cy="10.2" rx="2.8" ry="3" fill="#2d2d2d"/></g>
<rect x="34.7" y="4" width="22.3" height="21.8" rx="2"/>
<path d="M49.5 25.8V17.8H52.3L52.7 14.6H49.5V12.6C49.5 11.7 49.8 11.1 51.1 11.1H52.8V8.2C52.5 8.2 51.5 8.1 50.4 8.1C48 8.1 46.4 9.6 46.4 12.2V14.6H43.6V17.8H46.4V25.8Z" fill="#2d2d2d"/>
<path d="M65.5 4.5H81.5A1.5 1.5 0 0 1 83 6V16.5A1.5 1.5 0 0 1 81.5 18H72L68 21V18H65.5A1.5 1.5 0 0 1 64 16.5V6A1.5 1.5 0 0 1 65.5 4.5Z"/>
<path d="M67.5 9H76M67.5 12.5H73.5" stroke="#2d2d2d" stroke-width="1.8"/>
<path d="M86.5 9.5V19.5A1.5 1.5 0 0 1 85 21H75.5L78.5 24.5L80.5 21" fill="none" stroke="#7b7b7b" stroke-width="1.8"/>
<rect x="94" y="6" width="24.6" height="18.4" rx="2"/>
<path d="M95 7L106.3 16.5L117.6 7M95 23.4L103 15.6M117.6 23.4L109.6 15.6" fill="none" stroke="#2d2d2d" stroke-width="1.3"/>
</svg>
</body></html>
